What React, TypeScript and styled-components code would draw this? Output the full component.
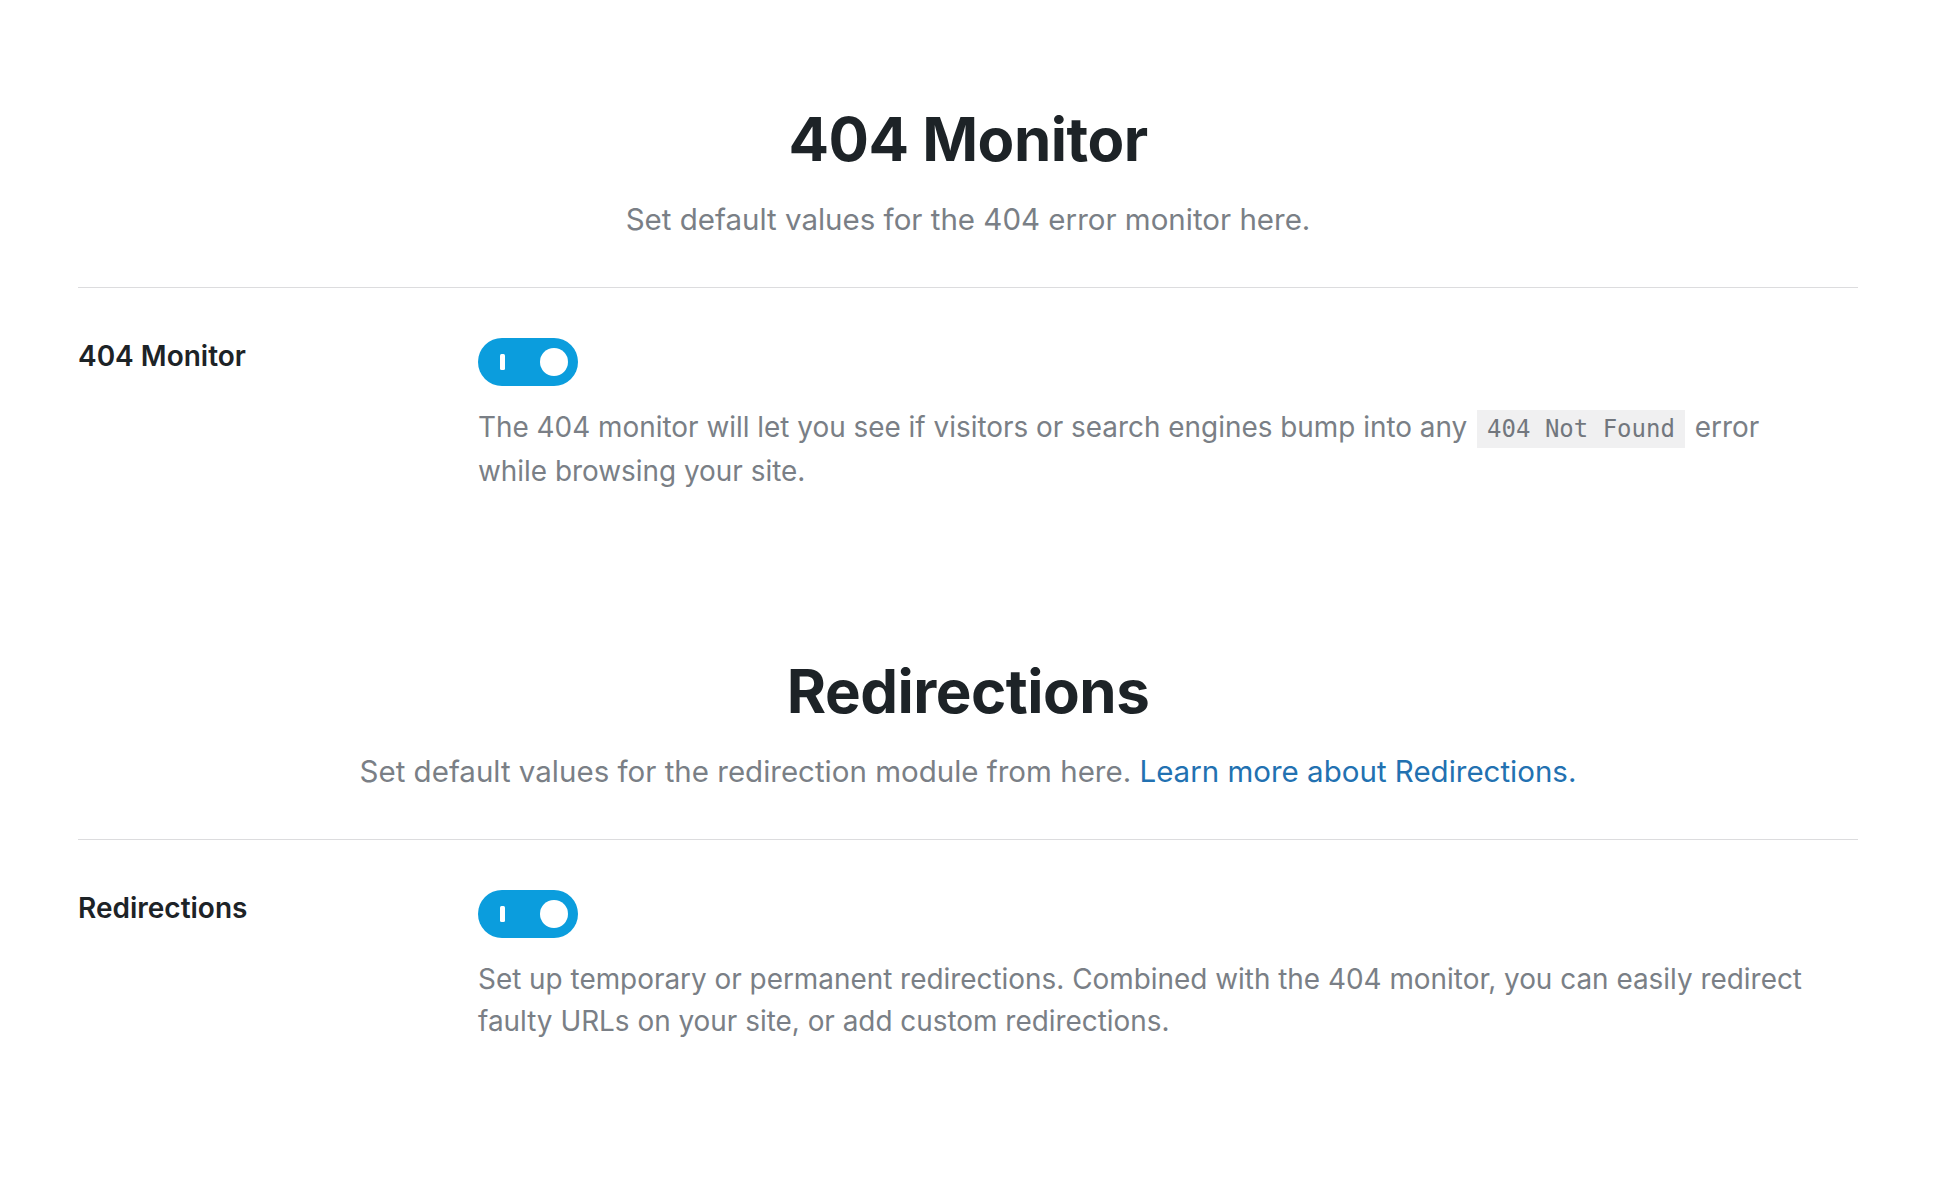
import React from "react";
import styled, { createGlobalStyle } from "styled-components";

const GlobalStyle = createGlobalStyle`
  html, body {
    margin: 0;
    padding: 0;
    background: #ffffff;
  }
  body {
    font-family: Inter, "Noto Sans", "Liberation Sans", sans-serif;
    color: #1d2327;
    -webkit-font-smoothing: antialiased;
  }
`;

const Page = styled.main`
  width: 1780px;
  margin: 0 auto;
  padding-top: 103px;
  display: flex;
  flex-direction: column;
  gap: 163px;
`;

const Section = styled.section`
  display: flex;
  flex-direction: column;
`;

const Header = styled.header`
  display: flex;
  flex-direction: column;
  align-items: center;
  text-align: center;
  gap: 24px;
  padding-bottom: 48px;
  border-bottom: 1px solid #dcdcde;
`;

const Title = styled.h2`
  margin: 0;
  font-size: 60px;
  line-height: 72px;
  font-weight: 700;
  letter-spacing: -0.5px;
  color: #1d2327;
`;

const Subtitle = styled.p`
  margin: 0;
  font-size: 29.5px;
  line-height: 40px;
  font-weight: 400;
  color: #7a7f86;
`;

const Link = styled.a`
  color: #2271b1;
  text-decoration: none;
`;

const Row = styled.div`
  display: grid;
  grid-template-columns: 400px 1fr;
  padding-top: 50px;
`;

const Label = styled.div`
  font-size: 28px;
  line-height: 36px;
  font-weight: 600;
  color: #1d2327;
`;

const Content = styled.div`
  display: flex;
  flex-direction: column;
  align-items: flex-start;
  gap: 20px;
`;

const Toggle = styled.button<{ $on: boolean }>`
  width: 100px;
  height: 48px;
  border: none;
  border-radius: 24px;
  background: ${(p) => (p.$on ? "#0b9ddd" : "#c3c4c7")};
  cursor: pointer;
  display: flex;
  align-items: center;
  justify-content: space-between;
  padding: 0 10px 0 22px;
  box-sizing: border-box;
`;

const OnMark = styled.span`
  width: 5px;
  height: 16px;
  border-radius: 1.5px;
  background: #ffffff;
`;

const Knob = styled.span`
  width: 28px;
  height: 28px;
  border-radius: 50%;
  background: #ffffff;
`;

const Description = styled.p`
  margin: 0;
  max-width: 1340px;
  font-size: 27.9px;
  line-height: 42px;
  font-weight: 400;
  color: #7a7f86;
`;

const Code = styled.code`
  font-family: "DejaVu Sans Mono", "Liberation Mono", monospace;
  font-size: 24px;
  color: #72777e;
  background: #f0f0f1;
  padding: 5px 10px;
  margin: 0 2px;
`;

type SettingProps = {
  title: string;
  subtitle: React.ReactNode;
  label: string;
  description: React.ReactNode;
};

function SettingSection({ title, subtitle, label, description }: SettingProps) {
  return (
    <Section>
      <Header>
        <Title>{title}</Title>
        <Subtitle>{subtitle}</Subtitle>
      </Header>
      <Row>
        <Label>{label}</Label>
        <Content>
          <Toggle $on={true} aria-pressed="true" aria-label={label}>
            <OnMark />
            <Knob />
          </Toggle>
          <Description>{description}</Description>
        </Content>
      </Row>
    </Section>
  );
}

export default function App() {
  return (
    <>
      <GlobalStyle />
      <Page>
        <SettingSection
          title="404 Monitor"
          subtitle="Set default values for the 404 error monitor here."
          label="404 Monitor"
          description={
            <>
              The 404 monitor will let you see if visitors or search engines bump into any{" "}
              <Code>404 Not Found</Code> error while browsing your site.
            </>
          }
        />
        <SettingSection
          title="Redirections"
          subtitle={
            <>
              Set default values for the redirection module from here.{" "}
              <Link href="#">Learn more about Redirections.</Link>
            </>
          }
          label="Redirections"
          description="Set up temporary or permanent redirections. Combined with the 404 monitor, you can easily redirect faulty URLs on your site, or add custom redirections."
        />
      </Page>
    </>
  );
}
